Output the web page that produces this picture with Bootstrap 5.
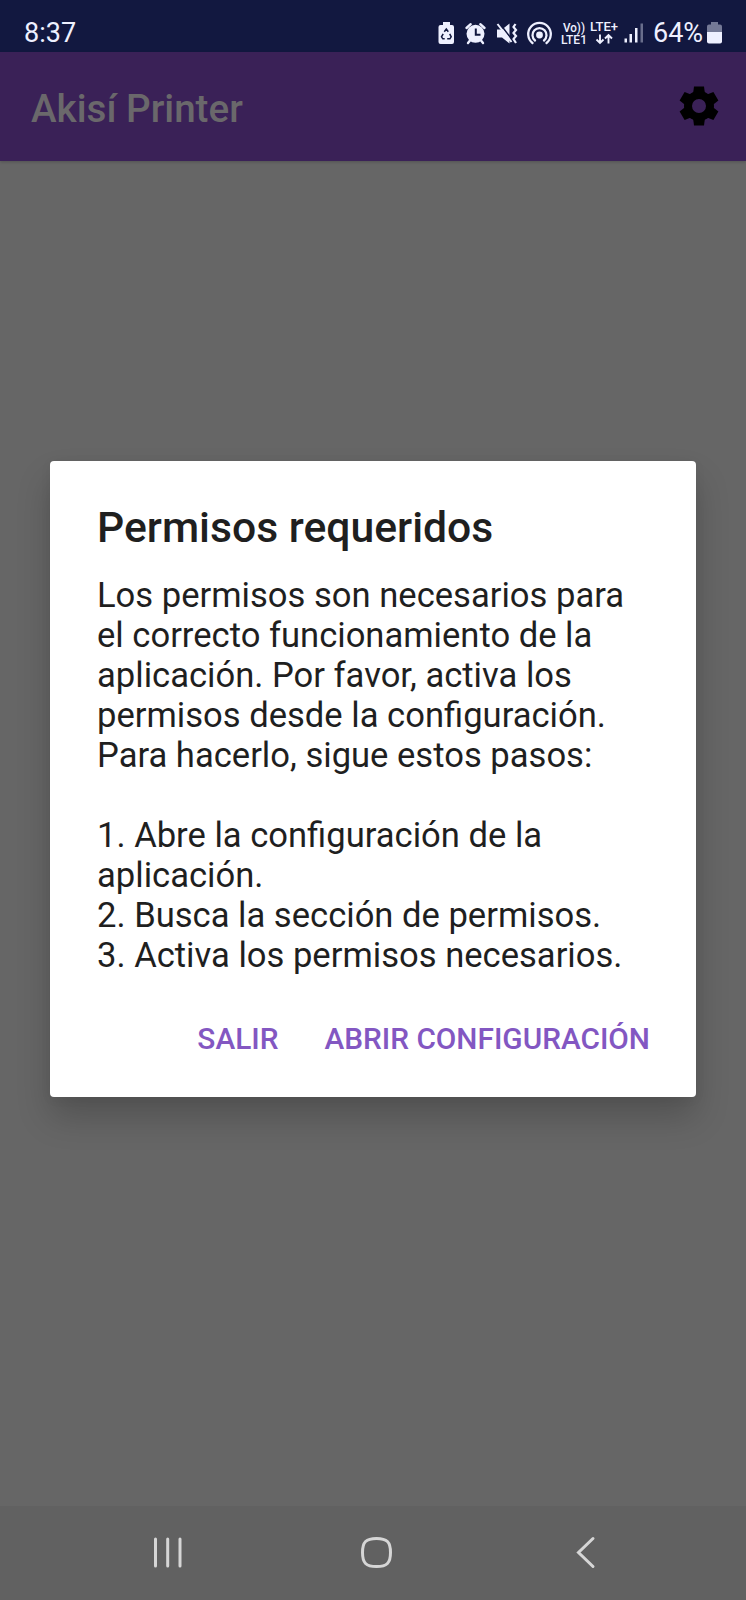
<!DOCTYPE html>
<html lang="es">
<head>
<meta charset="utf-8">
<meta name="viewport" content="width=device-width, initial-scale=1">
<title>Akisí Printer</title>
<link href="https://cdn.jsdelivr.net/npm/bootstrap@5.3.0/dist/css/bootstrap.min.css" rel="stylesheet">
<style>
body{font-family:Roboto,"Liberation Sans",sans-serif;background:#666;height:1600px;overflow:hidden;color:#1f1f1f}
svg{display:block;flex:none}
.status{height:52px;background:#121840;color:#eef0ff;padding:14px 24px 0 24px}
.clock{font-size:27px;line-height:38px}
.pct{font-size:27px;line-height:39px;width:50px;white-space:nowrap}
.appbar{height:109px;background:#3a2157;padding:0 26px 2px 31px;box-shadow:0 1px 3px rgba(0,0,0,.2);position:relative}
.app-title{font-size:38.6px;font-weight:500;line-height:44px;color:#6a686b;margin:0;padding-top:6px}
.stage{height:1345px;padding:300px 50px 0}
.dialog{height:636px;border:0;border-radius:4px;background:#fff;padding:42px 46px 0 47px;box-shadow:0 20px 34px rgba(0,0,0,.2),0 2px 12px rgba(0,0,0,.05)}
.dialog h1{font-size:42.7px;font-weight:500;line-height:48px;margin:0 0 24px;white-space:nowrap}
.message{font-size:34.6px;line-height:40.05px;white-space:pre;margin:0;height:400px}
.actions{margin-top:38px;gap:46px}
.actions .btn{font-size:29.8px;font-weight:500;line-height:52px;color:#8357c2;border:0;padding:0;white-space:nowrap}
.sysnav{height:94px;background:#616161;padding-top:1px}
</style>
</head>
<body class="d-flex flex-column">
<header class="status d-flex justify-content-between align-items-start">
  <span class="clock">8:37</span>
  <div class="d-flex">
    <svg width="215" height="36" viewBox="438 14 215 36" fill="#eef0ff">
      <!-- battery saver -->
      <path d="M443 22h7v3h2a2 2 0 0 1 2 2v15a2 2 0 0 1-2 2h-11.500a2 2 0 0 1-2-2V27a2 2 0 0 1 2-2h2.500z"/>
      <path d="M444.300 31.800l2-2.800 2 2.800M449.700 33.800l1.500 3-1.300 2h-2.700M444.700 38.800h-1.900l-1.300-2 1.700-3" fill="none" stroke="#121840" stroke-width="1.500"/>
      <!-- alarm -->
      <circle cx="475.500" cy="33.800" r="9"/>
      <path d="M466.500 28l4.200-3.800M484.500 28l-4.200-3.800M470 40.500l-2 2.500M481 40.500l2 2.500" stroke="#eef0ff" stroke-width="2.400" stroke-linecap="round"/>
      <path d="M475.800 28.500v6.300h4.700" fill="none" stroke="#121840" stroke-width="2"/>
      <!-- muted, vibrating -->
      <path d="M497 29.500h5l7.500-6v20l-7.500-6h-5z"/>
      <path d="M499.500 23.300l13 17" stroke="#121840" stroke-width="1.600"/>
      <path d="M497.500 24l14 18" stroke="#eef0ff" stroke-width="2"/>
      <path d="M515.500 24l-2 3 2.500 3-2.500 3 2.500 3-2.500 3 2.500 4" fill="none" stroke="#eef0ff" stroke-width="2.200"/>
      <!-- hotspot -->
      <circle cx="539.500" cy="35" r="3.400"/>
      <path d="M535 40.500a7 7 0 1 1 9 0M532.500 43a11.300 11.300 0 1 1 14 0" fill="none" stroke="#eef0ff" stroke-width="2.300" stroke-linecap="round"/>
      <!-- carrier labels -->
      <g font-family="Roboto,sans-serif" font-weight="500" font-size="12.500">
        <text x="563" y="31.500" textLength="22" lengthAdjust="spacingAndGlyphs">Vo))</text>
        <text x="561" y="44" textLength="26" lengthAdjust="spacingAndGlyphs">LTE1</text>
        <text x="590" y="31" textLength="28" lengthAdjust="spacingAndGlyphs">LTE+</text>
      </g>
      <path d="M600 34.500v8M596.500 39.500l3.500 3.500 3.500-3.500M608.500 43.500v-8M605 38.500l3.500-3.500 3.500 3.500" fill="none" stroke="#eef0ff" stroke-width="1.900"/>
      <!-- signal -->
      <path d="M624.500 38.500h2.500v4h-2.500zM629.500 34h2.500v8.500h-2.500zM635 28h2.500v14.500H635z"/>
      <path d="M640.500 23.500h2.500v19h-2.500z" opacity=".4"/>
    </svg>
    <span class="pct">64%</span>
    <svg width="19" height="36" viewBox="703 14 19 36" fill="#eef0ff">
      <path d="M711 22h7v2.500h2a2 2 0 0 1 2 2V32h-15v-5.500a2 2 0 0 1 2-2h2z" opacity=".45"/>
      <path d="M707 32h15v9.500a2 2 0 0 1-2 2h-11a2 2 0 0 1-2-2z"/>
    </svg>
  </div>
</header>
<nav class="appbar d-flex align-items-center justify-content-between">
  <h2 class="app-title">Akisí Printer</h2>
  <svg width="42" height="42" viewBox="-21 -21 42 42" aria-label="Ajustes">
    <defs><path id="tooth" d="M-5-19.500H5L6-12H-6z"/></defs>
    <circle r="11" fill="none" stroke="#000" stroke-width="8"/>
    <use href="#tooth"/>
    <use href="#tooth" transform="rotate(60)"/>
    <use href="#tooth" transform="rotate(120)"/>
    <use href="#tooth" transform="rotate(180)"/>
    <use href="#tooth" transform="rotate(240)"/>
    <use href="#tooth" transform="rotate(300)"/>
  </svg>
</nav>
<main class="stage">
  <section class="dialog card" role="dialog">
    <h1>Permisos requeridos</h1>
    <p class="message">Los permisos son necesarios para
el correcto funcionamiento de la
aplicación. Por favor, activa los
permisos desde la configuración.
Para hacerlo, sigue estos pasos:

1. Abre la configuración de la
aplicación.
2. Busca la sección de permisos.
3. Activa los permisos necesarios.</p>
    <div class="actions d-flex justify-content-end">
      <button class="btn">SALIR</button>
      <button class="btn">ABRIR CONFIGURACIÓN</button>
    </div>
  </section>
</main>
<footer class="sysnav">
  <svg width="746" height="93" viewBox="0 1507 746 93" fill="none" stroke="#d6d6d6" stroke-width="3" stroke-linecap="round">
    <path d="M155.500 1539v27M167.700 1539v27M180 1539v27"/>
    <path d="M376.500 1538.500c10.500 0 14 3.500 14 14s-3.500 14-14 14-14-3.500-14-14 3.500-14 14-14z"/>
    <path d="M593 1538.500L578.500 1552.500 593 1566.500"/>
  </svg>
</footer>
<script src="https://cdn.jsdelivr.net/npm/bootstrap@5.3.0/dist/js/bootstrap.bundle.min.js"></script>
</body>
</html>
